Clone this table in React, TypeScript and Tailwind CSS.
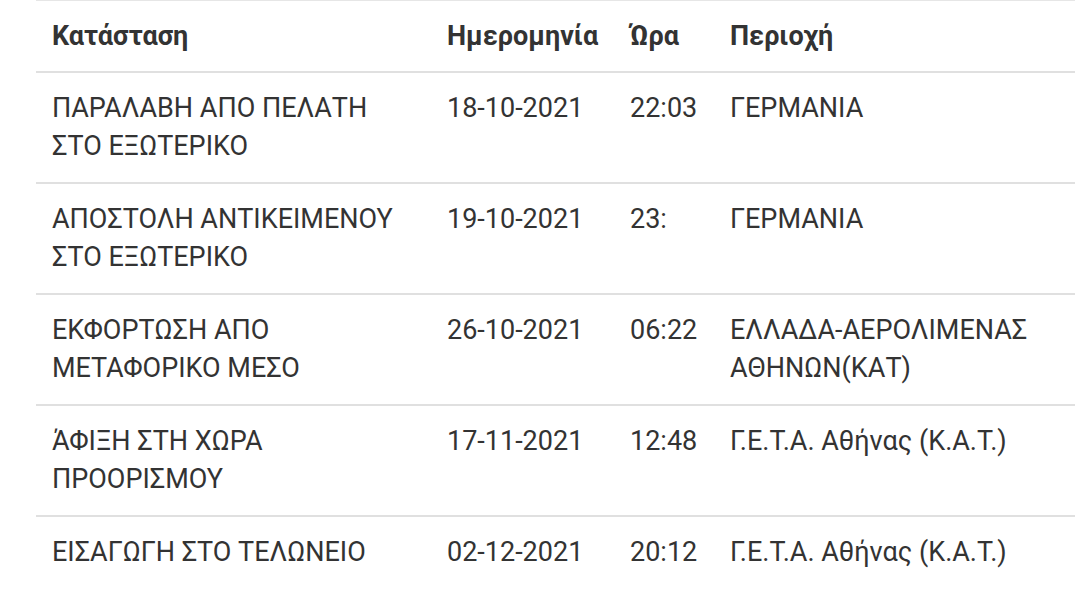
const ROWS = [
  { status: "ΠΑΡΑΛΑΒΗ ΑΠΟ ΠΕΛΑΤΗ ΣΤΟ ΕΞΩΤΕΡΙΚΟ", date: "18-10-2021", time: "22:03", area: "ΓΕΡΜΑΝΙΑ" },
  { status: "ΑΠΟΣΤΟΛΗ ΑΝΤΙΚΕΙΜΕΝΟΥ ΣΤΟ ΕΞΩΤΕΡΙΚΟ", date: "19-10-2021", time: "23:", area: "ΓΕΡΜΑΝΙΑ" },
  { status: "ΕΚΦΟΡΤΩΣΗ ΑΠΟ ΜΕΤΑΦΟΡΙΚΟ ΜΕΣΟ", date: "26-10-2021", time: "06:22", area: "ΕΛΛΑΔΑ-ΑΕΡΟΛΙΜΕΝΑΣ ΑΘΗΝΩΝ(ΚΑΤ)" },
  { status: "ΆΦΙΞΗ ΣΤΗ ΧΩΡΑ ΠΡΟΟΡΙΣΜΟΥ", date: "17-11-2021", time: "12:48", area: "Γ.Ε.Τ.Α. Αθήνας (Κ.Α.Τ.)" },
  { status: "ΕΙΣΑΓΩΓΗ ΣΤΟ ΤΕΛΩΝΕΙΟ", date: "02-12-2021", time: "20:12", area: "Γ.Ε.Τ.Α. Αθήνας (Κ.Α.Τ.)" },
];

export default function App() {
  return (
    <main className="w-[1080px] h-[609px] overflow-hidden bg-white font-['Roboto',sans-serif] text-[#333]">
      <div className="pl-[36px] pr-[5px]">
        <table className="w-full table-fixed border-collapse text-left">
          <colgroup>
            <col className="w-[395px]" />
            <col className="w-[183px]" />
            <col className="w-[100px]" />
            <col />
          </colgroup>
          <thead>
            <tr className="border-t border-[#e6e6e6] border-b-2 border-b-[#e0e0e0]">
              {["Κατάσταση", "Ημερομηνία", "Ώρα", "Περιοχή"].map((h) => (
                <th key={h} className="px-4 py-4 text-[27px] leading-[38px] font-bold">
                  {h}
                </th>
              ))}
            </tr>
          </thead>
          <tbody>
            {ROWS.map((r, i) => (
              <tr key={i} className="h-[111px] border-b-2 border-[#e0e0e0] align-top">
                <td className="px-4 pt-4 pb-[17px] text-[27px] leading-[38px]">{r.status}</td>
                <td className="px-4 pt-4 pb-[17px] text-[27px] leading-[38px]">{r.date}</td>
                <td className="px-4 pt-4 pb-[17px] text-[27px] leading-[38px]">{r.time}</td>
                <td className="px-4 pt-4 pb-[17px] text-[27px] leading-[38px]">{r.area}</td>
              </tr>
            ))}
          </tbody>
        </table>
      </div>
    </main>
  );
}
